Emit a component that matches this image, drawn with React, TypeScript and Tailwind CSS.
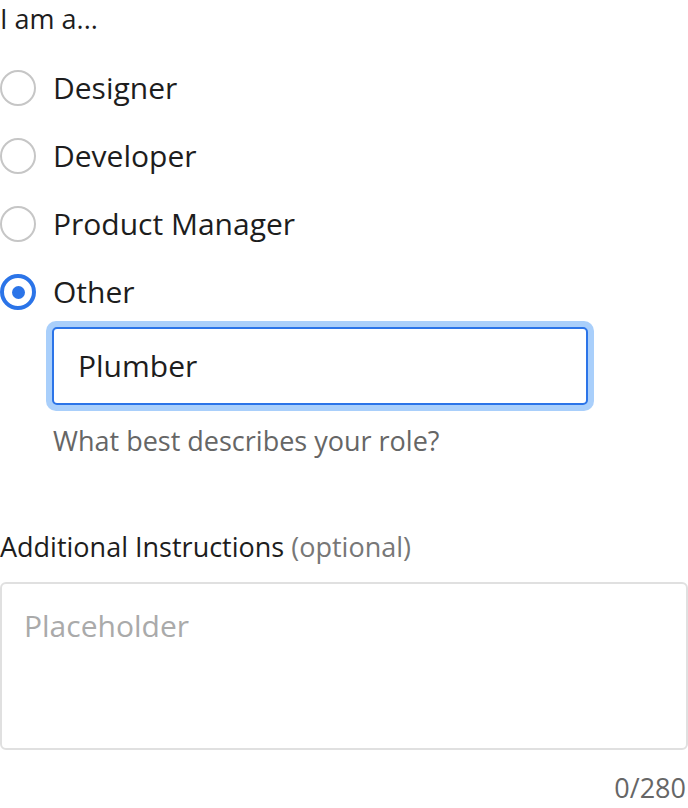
import React from "react";

const font = { fontFamily: "'Open Sans', 'Noto Sans', sans-serif" };

function Radio({ label, checked }: { label: string; checked?: boolean }) {
  return (
    <div className="flex items-center h-[68px]">
      {checked ? (
        <div className="w-[36px] h-[36px] rounded-full border-[4px] border-[#2b74e8] flex items-center justify-center shrink-0">
          <div className="w-[13px] h-[13px] rounded-full bg-[#2b74e8]" />
        </div>
      ) : (
        <div className="w-[36px] h-[36px] rounded-full border-2 border-[#c6c6c6] shrink-0" />
      )}
      <span className="ml-[17px] text-[30px] text-[#1d1d1d] leading-[36px]">{label}</span>
    </div>
  );
}

export default function App() {
  return (
    <div className="w-[688px] h-[808px] bg-white" style={font}>
      <div className="h-[40px] flex items-center text-[27px] leading-[32px] text-[#1d1d1d] -mt-[1px]">I am a...</div>
      <div className="mt-[15px]">
        <Radio label="Designer" />
        <Radio label="Developer" />
        <Radio label="Product Manager" />
        <Radio label="Other" checked />
      </div>
      <div className="ml-[46px] mt-[-5px] w-[548px] h-[90px] rounded-[10px] bg-[#a9cffb] p-[6px]">
        <div className="w-full h-full rounded-[5px] border-2 border-[#2b74e8] bg-white flex items-center pl-[24px] text-[30px] leading-[36px] text-[#1d1d1d]">
          Plumber
        </div>
      </div>
      <div className="ml-[53px] mt-[14px] text-[27px] text-[#666666] leading-[32px]">What best describes your role?</div>
      <div className="mt-[74px] text-[27px] text-[#1d1d1d] leading-[32px]">
        Additional Instructions <span className="text-[#777777]">(optional)</span>
      </div>
      <div className="mt-[19px] w-[688px] h-[168px] rounded-[6px] border-2 border-[#e0e0e0] pl-[22px] pt-[24px] text-[30px] text-[#aaaaaa] leading-[36px]">
        Placeholder
      </div>
      <div className="mt-[22px] text-right pr-[2px] text-[27px] text-[#666666] leading-[32px]">0/280</div>
    </div>
  );
}
